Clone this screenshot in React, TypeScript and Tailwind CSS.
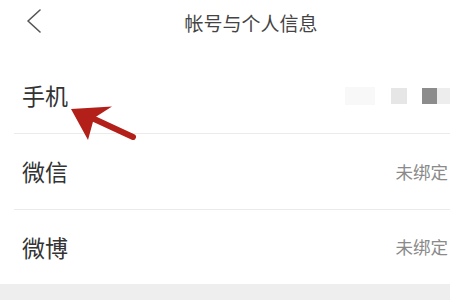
const font = { fontFamily: '"Noto Sans CJK SC", "Noto Sans", sans-serif' };

function Row({ label, value, last }: { label: string; value?: string; last?: boolean }) {
  return (
    <div className={`ml-[14px] flex items-center justify-between pl-[8px] pr-[2px] ${last ? "h-[74px]" : "h-[76px] border-b border-[#ebebeb]"}`}>
      <span className="text-[23px] leading-none text-[#333]">{label}</span>
      {value && <span className="text-[17.5px] leading-none text-[#8a8a8a]">{value}</span>}
    </div>
  );
}

export default function App() {
  return (
    <div className="relative h-[300px] w-[450px] overflow-hidden bg-white" style={font}>
      <div className="relative flex h-[44px] items-center justify-center">
        <svg className="absolute left-[26px] top-[9px]" width="16" height="24" viewBox="0 0 16 24">
          <polyline points="14,1 2,12 14,23" fill="none" stroke="#555" strokeWidth="1.6" strokeLinecap="round" strokeLinejoin="round" />
        </svg>
        <h1 className="ml-[52px] text-[19px] leading-none text-[#444]">帐号与个人信息</h1>
      </div>
      <div className="h-[14px]" />
      <div className="ml-[14px] flex h-[76px] items-center justify-between border-b border-[#ebebeb] pl-[8px]">
        <span className="text-[23px] leading-none text-[#333]">手机</span>
        <div className="flex items-center">
          <div className="h-[18px] w-[30px] bg-[#f8f8f8]" />
          <div className="ml-[16px] h-[16px] w-[16px] bg-[#e6e6e6]" />
          <div className="ml-[15px] h-[16px] w-[15px] bg-[#8c8c8c]" />
          <div className="h-[16px] w-[13px] bg-[#ededed]" />
        </div>
      </div>
      <Row label="微信" value="未绑定" />
      <Row label="微博" value="未绑定" last />
      <div className="h-[20px] bg-[#eeeeee]" />
      <svg className="absolute left-0 top-0" width="450" height="300" viewBox="0 0 450 300">
        <line x1="133" y1="137" x2="92" y2="118" stroke="#b3201a" strokeWidth="6" strokeLinecap="round" />
        <polygon points="71,109 112,106.5 94,118 88,140" fill="#b3201a" />
      </svg>
    </div>
  );
}
